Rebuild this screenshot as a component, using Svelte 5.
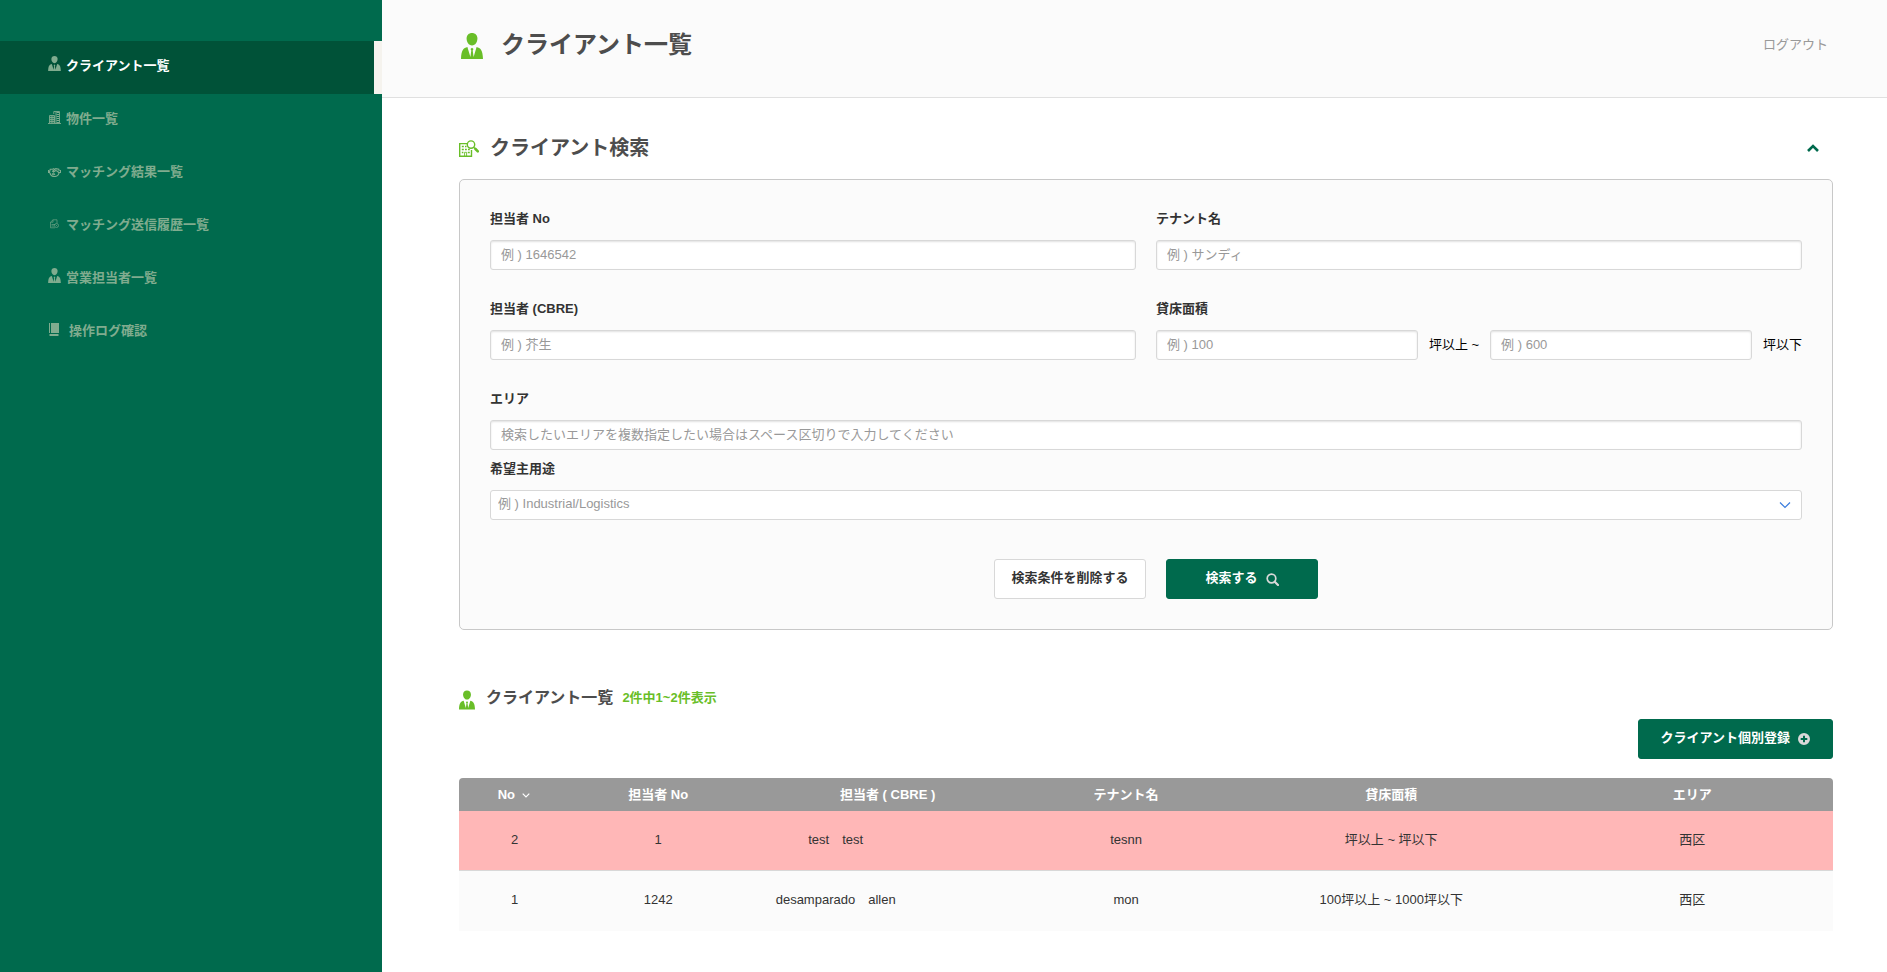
<script>
  const nav = [
    { icon: 'person', label: 'クライアント一覧', active: true },
    { icon: 'building', label: '物件一覧' },
    { icon: 'handshake', label: 'マッチング結果一覧' },
    { icon: 'history', label: 'マッチング送信履歴一覧' },
    { icon: 'person', label: '営業担当者一覧' },
    { icon: 'book', label: '操作ログ確認', wide: true }
  ];
  const rows = [
    { no: 2, staffNo: '1', cbre: 'test\u3000test', tenant: 'tesnn', size: '坪以上 ~ 坪以下', area: '西区', alert: true },
    { no: 1, staffNo: '1242', cbre: 'desamparado\u3000allen', tenant: 'mon', size: '100坪以上 ~ 1000坪以下', area: '西区' }
  ];
  let open = $state(true);
</script>

{#snippet person()}
  <svg class="person" viewBox="0 0 22 26" fill="currentColor" aria-hidden="true">
    <path d="M11 0C7.800 0 5.600 2.200 5.600 5.400c0 3.300 2 7 5.400 7s5.400-3.700 5.400-7C16.400 2.200 14.200 0 11 0z" />
    <path d="M6.400 14C2.600 15 .2 17 0 26h22c-.2-9-2.600-11-6.400-12L12.600 24l-.9-6.500.8-1.400-1.500-1.300-1.500 1.300.8 1.400L9.400 24z" />
  </svg>
{/snippet}

<div class="app">
  <aside class="sidebar">
    <nav>
      {#each nav as item}
        <a href="#top" class={['nav-item', item.active && 'active', item.wide && 'wide']}>
          <span class="nav-icon">
            {#if item.icon === 'person'}
              {@render person()}
            {:else if item.icon === 'building'}
              <svg class="building" viewBox="0 0 13 13" fill="none" stroke="currentColor" stroke-width=".9" aria-hidden="true">
                <path d="M0 12.500h13M1.500 12V4.500h5V12M3.200 4.500V12M4.900 4.500V12M1.500 6.500h5M1.500 8.500h5M1.500 10.500h5M5.800 3V.5h5.700V12M8 1v11" />
                <path d="M9.800 1v11" stroke-width="2.400" stroke-dasharray="1 1" />
              </svg>
            {:else if item.icon === 'handshake'}
              <svg class="handshake" viewBox="0 0 13 9" fill="none" stroke="currentColor" stroke-width="1.100" aria-hidden="true">
                <path d="M.5 2v3M12.500 2v3M1.300 5.200L2.200 1.300h2.300L6.300.6M6 2L7.800.6l3 .7.900 3.900" />
                <path d="M2 4.800C2.500 7.500 4.500 8.500 6.500 8.500s4-1 4.500-3.500c-1-1.500-2-2.300-3.300-2.500L5.500 4 4.600 3.300 6 2M4 5.500l1.500 1.500M5.500 5.200L7 6.800" />
              </svg>
            {:else if item.icon === 'history'}
              <svg class="history" viewBox="0 0 9 10" fill="none" stroke="currentColor" stroke-width=".6" aria-hidden="true">
                <path d="M5 8.800H.5V3.200L3 .8h4v3.500M3 .8v2.400H.5M1.500 5.500h3.500M1.500 7h2.500" />
                <circle cx="6.500" cy="6.500" r="2" />
                <path d="M5.800 5.800l1.400 1.400" />
              </svg>
            {:else}
              <svg class="book" viewBox="0 0 10 13" fill="currentColor" aria-hidden="true">
                <path d="M0 0h1v10H0zM2 0h8v10H2zM1 11h8.500v2H1L0 12z" />
              </svg>
            {/if}
          </span>
          <span>{item.label}</span>
        </a>
      {/each}
    </nav>
  </aside>

  <div class="page">
    <header class="page-header">
      <h1>{@render person()}<span>クライアント一覧</span></h1>
      <a class="logout" href="#logout">ログアウト</a>
    </header>

    <main>
      <div class="search-head">
        <h2>
          <svg class="search-icon" viewBox="0 0 20 17" fill="none" stroke="currentColor" aria-hidden="true">
            <path d="M8 3.600H.7v12.700h11.800V10" stroke-width="1.400" />
            <path d="M2.800 6.500h2M6 6.500h1.500M2.800 9.500h2M6 9.500h1.800M9 9.500h1.800M2.800 12.500h1.600M8.800 12.500h2" stroke-width="1.500" />
            <path d="M5.600 16v-3.700h2V16" stroke-width=".9" />
            <circle cx="12" cy="4.600" r="3.700" stroke-width="1.400" />
            <path d="M15 7.500l1.500 1.500" stroke-width="1.400" />
            <path d="M16.500 9l2.300 2.300" stroke-width="2.600" stroke-linecap="round" />
          </svg>
          <span>クライアント検索</span>
        </h2>
        <button class="toggle" type="button" aria-label="検索条件の開閉" aria-expanded={open} onclick={() => (open = !open)}>
          <svg viewBox="0 0 12 8" fill="none" stroke="currentColor" stroke-width="2.600" aria-hidden="true"><path d="M1 7l5-5 5 5" /></svg>
        </button>
      </div>

      {#if open}
        <form class="panel" onsubmit={(e) => e.preventDefault()}>
          <div class="grid">
            <div class="field">
              <label for="staff-no">担当者 No</label>
              <input id="staff-no" type="text" placeholder="例 ) 1646542" />
            </div>
            <div class="field">
              <label for="tenant">テナント名</label>
              <input id="tenant" type="text" placeholder="例 ) サンディ" />
            </div>
            <div class="field">
              <label for="cbre">担当者 (CBRE)</label>
              <input id="cbre" type="text" placeholder="例 ) 芥生" />
            </div>
            <div class="field">
              <label for="size-min">貸床面積</label>
              <div class="range">
                <input id="size-min" type="text" placeholder="例 ) 100" />
                <span>坪以上 ~</span>
                <input type="text" aria-label="貸床面積の上限" placeholder="例 ) 600" />
                <span>坪以下</span>
              </div>
            </div>
          </div>
          <div class="field area">
            <label for="area">エリア</label>
            <input id="area" type="text" placeholder="検索したいエリアを複数指定したい場合はスペース区切りで入力してください" />
          </div>
          <div class="field usage">
            <label for="usage">希望主用途</label>
            <div class="select">
              <select id="usage"><option>例 ) Industrial/Logistics</option></select>
              <svg viewBox="0 0 12 8" fill="none" stroke="currentColor" stroke-width="1.200" aria-hidden="true"><path d="M1 1.500l5 5 5-5" /></svg>
            </div>
          </div>
          <div class="actions">
            <button class="btn light" type="reset">検索条件を削除する</button>
            <button class="btn" type="submit">
              <span>検索する</span>
              <svg class="lens" viewBox="0 0 13 13" fill="none" stroke="currentColor" aria-hidden="true">
                <circle cx="5.500" cy="5.500" r="4.300" stroke-width="1.700" />
                <path d="M8.700 8.700l3.300 3.300" stroke-width="2.200" stroke-linecap="round" />
              </svg>
            </button>
          </div>
        </form>
      {/if}

      <section>
        <div class="list-head">
          <h3>{@render person()}<span>クライアント一覧</span></h3>
          <span class="count">2件中1~2件表示</span>
        </div>
        <div class="list-actions">
          <button class="btn register" type="button">
            <span>クライアント個別登録</span>
            <svg class="plus" viewBox="0 0 12 12" aria-hidden="true">
              <path fill="currentColor" fill-rule="evenodd" d="M6 0a6 6 0 100 12A6 6 0 006 0zM5 2.700h2V5h2.300v2H7v2.300H5V7H2.700V5H5z" />
            </svg>
          </button>
        </div>
        <table>
          <thead>
            <tr>
              <th class="c-no">No <svg viewBox="0 0 8 5" fill="none" stroke="currentColor" stroke-width="1.200" aria-hidden="true"><path d="M.7.7L4 4 7.300.7" /></svg></th>
              <th class="c-staff">担当者 No</th>
              <th class="c-cbre">担当者 ( CBRE )</th>
              <th class="c-tenant">テナント名</th>
              <th class="c-size">貸床面積</th>
              <th class="c-area">エリア</th>
            </tr>
          </thead>
          <tbody>
            {#each rows as row}
              <tr class={{ alert: row.alert }}>
                <td>{row.no}</td>
                <td>{row.staffNo}</td>
                <td class="name">{row.cbre}</td>
                <td>{row.tenant}</td>
                <td>{row.size}</td>
                <td class="c-area">{row.area}</td>
              </tr>
            {/each}
          </tbody>
        </table>
      </section>
    </main>
  </div>
</div>

<style>
  :global(body) {
    background: #fff;
    color: #333;
    font-family: "Liberation Sans", "Noto Sans CJK JP", sans-serif;
    font-size: 13px;
    line-height: 20px;
  }
  .app, .app * { box-sizing: border-box; }
  .app { display: flex; min-height: 100vh; }
  svg { display: block; flex: none; }
  a { text-decoration: none; }
  input, select, button { font: inherit; color: inherit; }
  h1, h2, h3 { margin: 0; color: #4d4d4d; display: flex; align-items: center; }

  .sidebar { flex: 0 0 382px; background: #006a4d; padding-top: 41px; }
  .nav-item {
    display: flex;
    align-items: center;
    height: 53px;
    padding: 0 0 3px 48px;
    color: #80ac8f;
    font-weight: bold;
  }
  .nav-item.active { background: #005238; border-right: 8px solid #f5f3ee; color: #fff; }
  .nav-icon { width: 18px; color: #80ac8f; padding-bottom: 3px; }
  .wide .nav-icon { width: 21px; }
  .nav-icon .person { width: 13px; height: 15px; margin-bottom: 2px; }
  .building { width: 13px; height: 13px; }
  .handshake { width: 13px; height: 9px; margin-top: 4px; }
  .history { width: 9px; height: 10px; margin-left: 2px; }
  .book { width: 10px; height: 13px; margin-left: 1px; }

  .page { flex: 1; min-width: 0; }
  .page-header {
    display: flex;
    justify-content: space-between;
    align-items: center;
    height: 98px;
    padding: 0 59px 7px 79px;
    background: #fbfbfb;
    border-bottom: 1px solid #e0e0e0;
  }
  h1 { font-size: 24px; line-height: 32px; gap: 18px; }
  .person { color: #69be28; }
  .nav-icon .person { color: inherit; }
  h1 .person { width: 22px; height: 26px; margin-top: 2px; }
  .logout { color: #999; }

  main { padding: 34px 54px 40px 77px; }
  .search-head { display: flex; justify-content: space-between; align-items: center; height: 32px; margin-bottom: 15px; }
  h2 { font-size: 20px; line-height: 32px; gap: 11px; }
  .search-icon { width: 20px; height: 17px; color: #69be28; }
  .toggle { border: 0; background: none; padding: 8px 14px; color: #006a4d; cursor: pointer; }
  .toggle svg { width: 12px; height: 8px; }

  .panel { padding: 29px 30px 30px; border: 1px solid #c8c8c8; border-radius: 5px; background: #fbfbfb; }
  .grid { display: grid; grid-template-columns: 1fr 1fr; gap: 29px 20px; }
  label { display: block; margin-bottom: 11px; font-weight: bold; }
  input, select {
    display: block;
    width: 100%;
    height: 30px;
    border: 1px solid #d8d8d8;
    border-radius: 3px;
    background: #fff;
    padding: 0 10px 2px;
    outline-color: #006a4d;
  }
  input { box-shadow: inset 0 1px 2px rgba(0, 0, 0, .12); }
  input::placeholder { color: #999; opacity: 1; }
  .range { display: flex; align-items: center; gap: 11px; color: #000; }
  .range input { flex: 1; min-width: 0; }
  .range span { white-space: nowrap; }
  .area { margin-top: 29px; }
  .usage { margin-top: 9px; }
  .select { display: grid; align-items: center; }
  .select > * { grid-area: 1 / 1; }
  .select select { appearance: none; padding: 0 7px 2px; color: #999; }
  .select svg { width: 12px; height: 8px; justify-self: end; margin-right: 11px; color: #3b7ddd; pointer-events: none; }
  .actions { display: flex; justify-content: center; gap: 20px; margin-top: 39px; padding-left: 20px; }
  .btn {
    display: flex;
    align-items: center;
    justify-content: center;
    gap: 8px;
    min-width: 152px;
    height: 40px;
    padding: 0 8px 3px;
    border: 1px solid #006a4d;
    border-radius: 3px;
    background: #006a4d;
    color: #fff;
    font-weight: bold;
    cursor: pointer;
  }
  .btn.light { border-color: #d8d8d8; background: #fff; color: #333; }
  .btn svg { color: #d9d9d9; margin-top: 3px; }
  .lens { width: 13px; height: 13px; }
  .plus { width: 12px; height: 12px; }

  .list-head { display: flex; align-items: center; gap: 9px; margin-top: 56px; height: 24px; }
  h3 { font-size: 16px; line-height: 24px; gap: 11px; }
  h3 .person { width: 16px; height: 20px; margin-top: 3px; }
  .count { color: #69be28; font-weight: bold; }
  .list-actions { display: flex; justify-content: flex-end; margin: 9px 0 19px; }
  .register { padding: 0 22px 3px; }

  table { width: 100%; table-layout: fixed; border-collapse: separate; border-spacing: 0; text-align: center; }
  th { height: 33px; padding: 0; background: #999; color: #fff; font-weight: bold; }
  th:first-child { border-top-left-radius: 4px; }
  th:last-child { border-top-right-radius: 4px; }
  th svg { display: inline-block; width: 8px; height: 5px; margin-left: 3px; vertical-align: middle; }
  td { height: 60px; padding: 0 0 2px; background: #fbfbfb; }
  .alert td { background: #ffb7b7; border-bottom: 1px solid #d8d8d8; }
  .c-no { width: 8.100%; padding-right: 2px; }
  .c-staff { width: 12.800%; }
  .c-cbre { width: 20.600%; }
  .c-tenant { width: 14.100%; }
  .c-size { width: 24.500%; }
  .c-area { padding-right: 8px; }
  .name { padding-right: 104px; }
</style>
